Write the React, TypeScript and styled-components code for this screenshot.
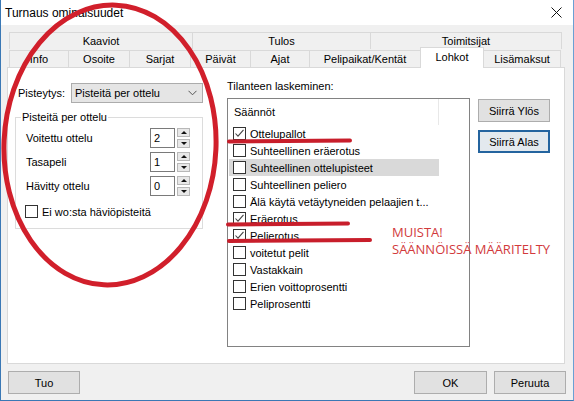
import React from "react";
import styled, { createGlobalStyle } from "styled-components";

const GlobalStyle = createGlobalStyle`
  html, body {
    margin: 0;
    padding: 0;
    background: #ffffff;
  }
  body {
    font-family: "Liberation Sans", Arial, sans-serif;
    font-size: 11px;
    color: #000;
  }
  * {
    box-sizing: border-box;
  }
`;

type Rule = { label: string; checked?: boolean; selected?: boolean };

const rules: Rule[] = [
  { label: "Ottelupallot", checked: true },
  { label: "Suhteellinen eräerotus" },
  { label: "Suhteellinen ottelupisteet", selected: true },
  { label: "Suhteellinen peliero" },
  { label: "Älä käytä vetäytyneiden pelaajien t..." },
  { label: "Eräerotus", checked: true },
  { label: "Pelierotus", checked: true },
  { label: "voitetut pelit" },
  { label: "Vastakkain" },
  { label: "Erien voittoprosentti" },
  { label: "Peliprosentti" },
];

const backTabs = [
  { label: "Kaaviot", width: 183 },
  { label: "Tulos", width: 178 },
  { label: "Toimitsijat", width: 192 },
];

const frontTabs = [
  { label: "Info", width: 59 },
  { label: "Osoite", width: 61 },
  { label: "Sarjat", width: 61 },
  { label: "Päivät", width: 60 },
  { label: "Ajat", width: 59 },
  { label: "Pelipaikat/Kentät", width: 111 },
  { label: "Lohkot", width: 64, active: true },
  { label: "Lisämaksut", width: 78 },
];

const spinners = [
  { label: "Voitettu ottelu", value: "2" },
  { label: "Tasapeli", value: "1" },
  { label: "Hävitty ottelu", value: "0" },
];

const CheckBox = ({ checked }: { checked?: boolean }) => (
  <Box>
    {checked && (
      <svg width="11" height="11" viewBox="0 0 11 11">
        <path d="M1.5 5.5 L4 8.2 L9.5 1.8" fill="none" stroke="#444" strokeWidth="1.1" />
      </svg>
    )}
  </Box>
);

const App = () => {
  return (
    <>
      <GlobalStyle />
      <Window>
        <TitleBar>
          <Title>Turnaus ominaisuudet</Title>
          <Close width="11" height="11" viewBox="0 0 11 11">
            <path d="M0.5 0.5 L10.5 10.5 M10.5 0.5 L0.5 10.5" stroke="#111" strokeWidth="1" />
          </Close>
        </TitleBar>

        <Body>
          <TabStrip>
            <TabRow>
              {backTabs.map((t, i) => (
                <Tab key={t.label} $width={t.width} $last={i === backTabs.length - 1}>
                  {t.label}
                </Tab>
              ))}
            </TabRow>
            <FrontRow>
              {frontTabs.map((t, i) => (
                <Tab
                  key={t.label}
                  $width={t.width}
                  $last={i === frontTabs.length - 1}
                  $active={t.active}
                >
                  {t.label}
                </Tab>
              ))}
            </FrontRow>
          </TabStrip>

          <Panel>
            <LeftColumn>
              <ScoringRow>
                <FieldLabel>Pisteytys:</FieldLabel>
                <Dropdown>
                  <span>Pisteitä per ottelu</span>
                  <svg width="9" height="6" viewBox="0 0 9 6">
                    <path d="M0.5 0.8 L4.5 4.8 L8.5 0.8" fill="none" stroke="#555" strokeWidth="1" />
                  </svg>
                </Dropdown>
              </ScoringRow>

              <GroupBox>
                <Legend>Pisteitä per ottelu</Legend>
                {spinners.map((s, i) => (
                  <SpinRow key={s.label} $first={i === 0}>
                    <SpinLabel>{s.label}</SpinLabel>
                    <SpinInput>{s.value}</SpinInput>
                    <SpinArrows>
                      <ArrowButton $up />
                      <ArrowButton />
                    </SpinArrows>
                  </SpinRow>
                ))}
                <CheckRow>
                  <CheckBox />
                  <CheckText>Ei wo:sta häviöpisteitä</CheckText>
                </CheckRow>
              </GroupBox>
            </LeftColumn>

            <RightColumn>
              <FieldLabel>Tilanteen laskeminen:</FieldLabel>
              <ListBox>
                <ListHeader>Säännöt</ListHeader>
                {rules.map((r) => (
                  <ListRow key={r.label} $selected={r.selected}>
                    <CheckBox checked={r.checked} />
                    <CheckText>{r.label}</CheckText>
                  </ListRow>
                ))}
              </ListBox>
            </RightColumn>

            <ButtonColumn>
              <Button>Siirrä Ylös</Button>
              <Button $primary>Siirrä Alas</Button>
            </ButtonColumn>
          </Panel>

          <Footer>
            <Button>Tuo</Button>
            <Spacer />
            <Button $wide>OK</Button>
            <Button $gap>Peruuta</Button>
          </Footer>
        </Body>

        <Scribbles width="574" height="401" viewBox="0 0 574 401">
          <ellipse
            cx="110"
            cy="145"
            rx="106"
            ry="140"
            fill="none"
            stroke="#d11f2b"
            strokeWidth="5"
            transform="rotate(2.5 110 145)"
          />
          <path d="M229 141.5 L350 140.5" stroke="#c81e2b" strokeWidth="4" strokeLinecap="round" />
          <path d="M228 224.5 L348 223.5" stroke="#c81e2b" strokeWidth="4" strokeLinecap="round" />
          <path d="M229 241 L370 240" stroke="#c81e2b" strokeWidth="4" strokeLinecap="round" />
        </Scribbles>
        <Note>
          MUISTA!
          <br />
          SÄÄNNÖISSÄ MÄÄRITELTY
        </Note>
      </Window>
    </>
  );
};

const Window = styled.div`
  position: relative;
  width: 574px;
  height: 401px;
  overflow: hidden;
  display: flex;
  flex-direction: column;
  border-left: 1px solid #3a78b5;
  border-right: 1px solid #6aa0d4;
  border-bottom: 1px solid #3a78b5;
`;

const TitleBar = styled.div`
  height: 25px;
  flex-shrink: 0;
  background: #ffffff;
  display: flex;
  align-items: center;
  padding-left: 4px;
`;

const Title = styled.span`
  font-size: 12px;
  color: #000;
`;

const Close = styled.svg`
  margin-left: auto;
  margin-right: 11px;
`;

const Body = styled.div`
  flex: 1;
  background: #f0f0f0;
  padding: 7px 8px 0 6px;
  display: flex;
  flex-direction: column;
`;

const TabStrip = styled.div`
  margin: 0 2px 0 2px;
  display: flex;
  flex-direction: column;
`;

const TabRow = styled.div`
  display: flex;
  height: 17px;
`;

const FrontRow = styled.div`
  display: flex;
  align-items: flex-end;
  height: 18px;
`;

const Tab = styled.div<{ $width: number; $last?: boolean; $active?: boolean }>`
  width: ${(p) => p.$width}px;
  height: ${(p) => (p.$active ? 21 : 17)}px;
  flex-shrink: 0;
  display: flex;
  align-items: center;
  justify-content: center;
  background: ${(p) => (p.$active ? "#ffffff" : "#f0f0f0")};
  border-top: 1px solid #d9d9d9;
  border-left: 1px solid #d9d9d9;
  border-right: ${(p) => (p.$last || p.$active ? "1px solid #d9d9d9" : "none")};
  margin-right: ${(p) => (p.$active ? -1 : 0)}px;
  margin-bottom: ${(p) => (p.$active ? -1 : 0)}px;
  padding-bottom: ${(p) => (p.$active ? 3 : 0)}px;
  position: ${(p) => (p.$active ? "relative" : "static")};
  z-index: ${(p) => (p.$active ? 1 : "auto")};
  white-space: nowrap;
`;

const Panel = styled.div`
  height: 297px;
  background: #ffffff;
  border: 1px solid #d9d9d9;
  display: flex;
  padding-left: 7px;
`;

const LeftColumn = styled.div`
  width: 188px;
  margin-top: 15px;
  display: flex;
  flex-direction: column;
`;

const ScoringRow = styled.div`
  height: 20px;
  display: flex;
  align-items: center;
`;

const FieldLabel = styled.div`
  line-height: 13px;
  padding-left: 3px;
  white-space: nowrap;
`;

const Dropdown = styled.div`
  margin-left: auto;
  width: 132px;
  height: 20px;
  background: #e5e5e5;
  border: 1px solid #acacac;
  display: flex;
  align-items: center;
  justify-content: space-between;
  padding: 0 5px 0 3px;
`;

const GroupBox = styled.fieldset`
  margin: 8px 0 0 0;
  padding: 4px 12px 10px 10px;
  border: 1px solid #dcdcdc;
  min-width: 0;
`;

const Legend = styled.legend`
  margin-left: -5px;
  padding: 0 1px;
  line-height: 13px;
`;

const SpinRow = styled.div<{ $first?: boolean }>`
  height: 20px;
  margin-top: ${(p) => (p.$first ? 0 : 4)}px;
  display: flex;
  align-items: center;
`;

const SpinLabel = styled.div`
  flex: 1;
`;

const SpinInput = styled.div`
  width: 25px;
  height: 20px;
  border: 1px solid #7a7a7a;
  background: #fff;
  padding-left: 3px;
  line-height: 18px;
`;

const SpinArrows = styled.div`
  width: 13px;
  margin-left: 2px;
  display: flex;
  flex-direction: column;
  gap: 2px;
`;

const ArrowButton = styled.div<{ $up?: boolean }>`
  height: 9px;
  background: #e8e8e8;
  border: 1px solid #b8b8b8;
  display: flex;
  align-items: center;
  justify-content: center;
  &::after {
    content: "";
    border-left: 3px solid transparent;
    border-right: 3px solid transparent;
    ${(p) => (p.$up ? "border-bottom: 3px solid #111;" : "border-top: 3px solid #111;")}
  }
`;

const CheckRow = styled.div`
  margin-top: 9px;
  margin-left: -1px;
  display: flex;
  align-items: center;
`;

const Box = styled.div`
  width: 13px;
  height: 13px;
  flex-shrink: 0;
  border: 1px solid #333;
  background: #fff;
  display: flex;
  align-items: center;
  justify-content: center;
`;

const CheckText = styled.span`
  margin-left: 4px;
  white-space: nowrap;
`;

const RightColumn = styled.div`
  margin-left: 24px;
  margin-top: 12px;
  display: flex;
  flex-direction: column;
  ${FieldLabel} {
    padding-left: 0;
  }
`;

const ListBox = styled.div`
  margin-top: 5px;
  width: 243px;
  height: 249px;
  border: 1px solid #828282;
  background: #fff;
`;

const ListHeader = styled.div`
  width: 211px;
  height: 26px;
  border-right: 1px solid #e8e8e8;
  display: flex;
  align-items: center;
  padding-left: 6px;
`;

const ListRow = styled.div<{ $selected?: boolean }>`
  width: 210px;
  height: 17px;
  margin-left: 1px;
  padding-left: 4px;
  display: flex;
  align-items: center;
  background: ${(p) => (p.$selected ? "#d9d9d9" : "transparent")};
`;

const ButtonColumn = styled.div`
  margin-left: 8px;
  margin-top: 31px;
  display: flex;
  flex-direction: column;
  gap: 8px;
`;

const Button = styled.div<{ $primary?: boolean; $wide?: boolean; $gap?: boolean }>`
  width: ${(p) => (p.$wide ? 73 : 72)}px;
  height: 23px;
  margin-left: ${(p) => (p.$gap ? 7 : 0)}px;
  display: flex;
  align-items: center;
  justify-content: center;
  background: ${(p) => (p.$primary ? "#e3e9ee" : "#e1e1e1")};
  border: ${(p) => (p.$primary ? "2px solid #24649f" : "1px solid #adadad")};
  white-space: nowrap;
`;

const Footer = styled.div`
  margin-top: 7px;
  margin-right: -1px;
  padding-left: 1px;
  display: flex;
`;

const Spacer = styled.div`
  flex: 1;
`;

const Scribbles = styled.svg`
  position: absolute;
  left: -1px;
  top: 0;
  pointer-events: none;
  z-index: 5;
`;

const Note = styled.div`
  position: absolute;
  left: 391px;
  top: 224px;
  z-index: 5;
  font-family: "Open Sans", "Liberation Sans", sans-serif;
  font-size: 13px;
  line-height: 17px;
  color: #d23a3c;
  white-space: nowrap;
`;

export default App;
